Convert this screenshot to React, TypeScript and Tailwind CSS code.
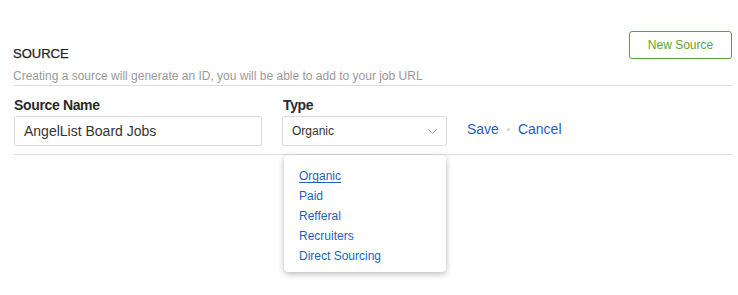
import { useState } from 'react'

const types = ['Organic', 'Paid', 'Refferal', 'Recruiters', 'Direct Sourcing']

const App = () => {
  const [name, setName] = useState('AngelList Board Jobs')
  const [selected] = useState('Organic')

  return (
    <div className="min-h-[295px] bg-white pl-[14px] pr-[6px] pt-[31px] font-['Liberation_Sans',Arial,sans-serif]">
      {/* header */}
      <div className="flex items-start justify-between pb-px">
        <div className="pt-[15px]">
          <h2 className="-ml-px text-[13px] leading-4 text-[#222] [-webkit-text-stroke:0.25px_#222]">SOURCE</h2>
          <p className="-ml-px mt-[6px] text-[12px] leading-4 text-[#9a9a9a]">
            Creating a source will generate an ID, you will be able to add to your job URL
          </p>
        </div>
        <button className="h-[28px] w-[103px] rounded-[3px] border border-[#5f9f2b] text-[12px] text-[#5fa62a]">
          New Source
        </button>
      </div>
      <div className="h-px bg-[#ddd]" />

      {/* form row */}
      <div className="mt-[11px] flex items-start">
        <div className="w-[248px]">
          <label className="block text-[14px] font-bold leading-4 tracking-[-0.35px] text-[#2a2a2a]">
            Source Name
          </label>
          <input
            value={name}
            onChange={(e) => setName(e.target.value)}
            className="mt-[3px] h-[30px] w-full rounded-[2px] border border-[#ddd] px-[9px] text-[14px] text-[#333] outline-none"
          />
        </div>
        <div className="ml-[20px] w-[165px]">
          <label className="block pl-px text-[14px] font-bold leading-4 tracking-[-0.35px] text-[#2a2a2a]">
            Type
          </label>
          <div className="relative mt-[3px]">
            <div className="flex h-[30px] items-center justify-between rounded-[2px] border border-[#ddd] pl-[9px] pr-[9px] text-[12px] text-[#333]">
              <span>{selected}</span>
              <svg width="9" height="5" viewBox="0 0 9 5" fill="none" stroke="#999" strokeWidth="1">
                <polyline points="0.5,0.5 4.5,4.5 8.5,0.5" />
              </svg>
            </div>
            {/* dropdown menu */}
            <div className="absolute left-[2px] top-[39px] z-10 w-[162px] rounded-[4px] bg-white pb-[6px] pl-[15px] pt-[11px] shadow-[0_2px_6px_rgba(0,0,0,0.28)]">
              {types.map((t) => (
                <a
                  key={t}
                  href="#"
                  className={`block text-[12px] leading-5 text-[#1d5fc4] ${
                    t === selected ? 'underline underline-offset-[2px]' : ''
                  }`}
                >
                  {t}
                </a>
              ))}
            </div>
          </div>
        </div>
        <div className="ml-[20px] mt-[24px] flex items-center text-[14px] leading-4 text-[#1d5fc4]">
          <a href="#">Save</a>
          <span className="mx-[8px] h-[3px] w-[3px] rounded-full bg-[#d5d5d5]" />
          <a href="#">Cancel</a>
        </div>
      </div>
      <div className="mt-[8px] h-px bg-[#ddd]" />
    </div>
  )
}

export default App
